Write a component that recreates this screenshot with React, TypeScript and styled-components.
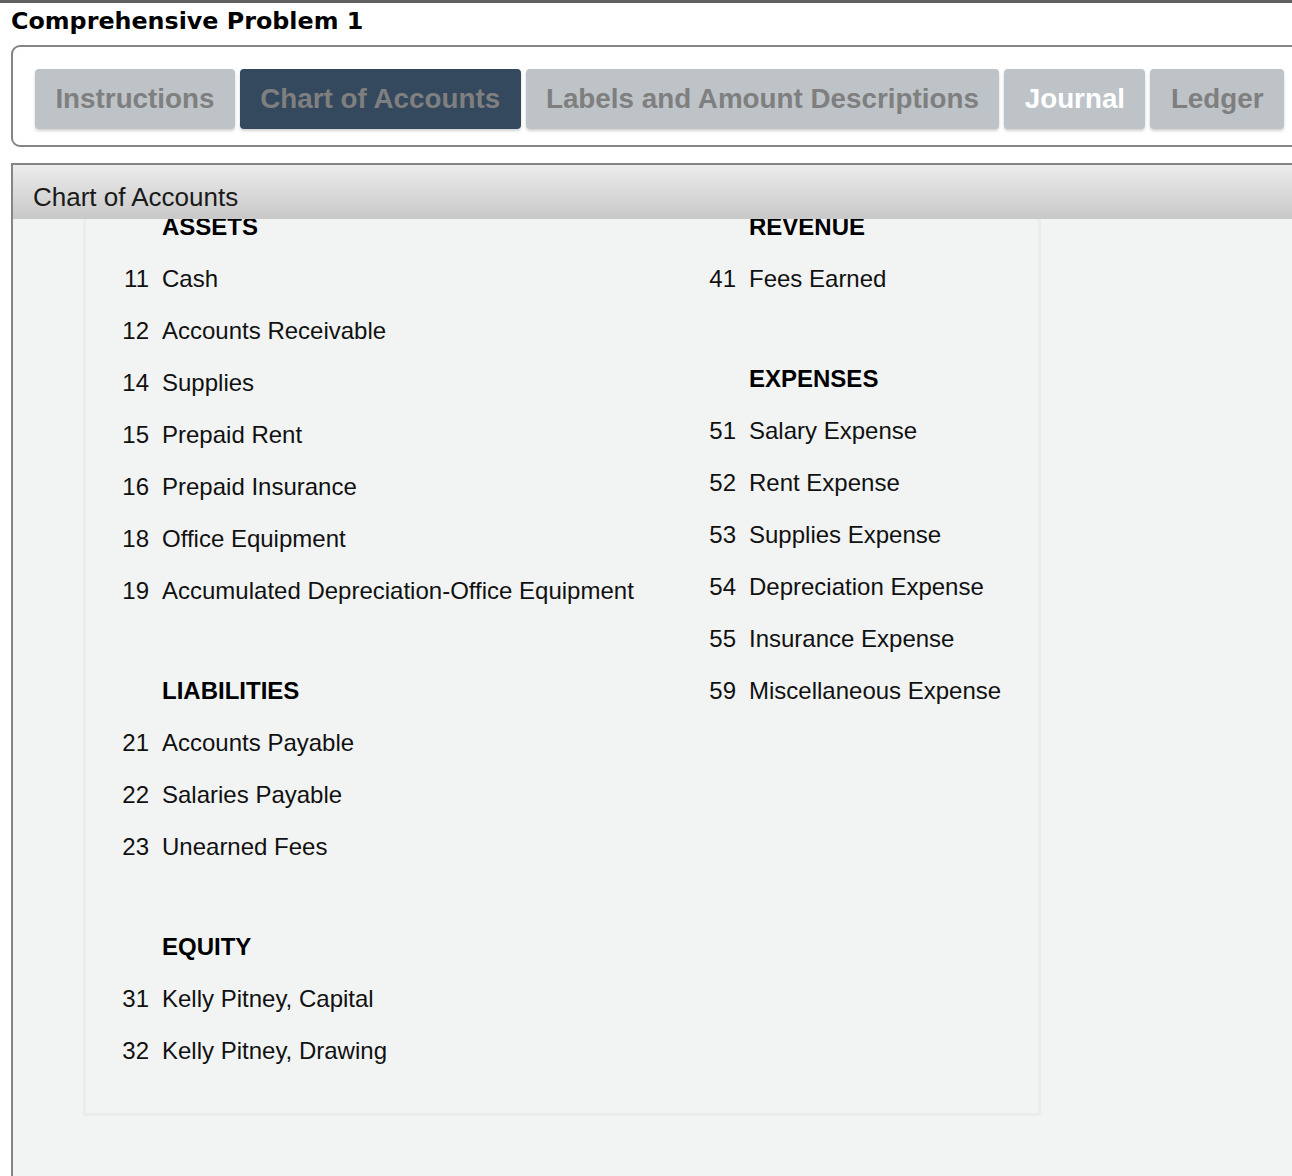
import React from "react";
import styled, { createGlobalStyle } from "styled-components";

const GlobalStyle = createGlobalStyle`
  html, body {
    margin: 0;
    padding: 0;
    background: #ffffff;
    overflow: hidden;
  }
  body {
    font-family: "Liberation Sans", Arial, sans-serif;
    color: #111;
  }
`;

const Page = styled.div`
  border-top: 3px solid #5f5f5f;
  padding-left: 11px;
  width: 1320px;
`;

const Title = styled.h1`
  margin: 0;
  padding-top: 4px;
  height: 38px;
  font-family: "DejaVu Sans", Verdana, sans-serif;
  font-weight: bold;
  font-size: 23.8px;
  line-height: 28px;
  color: #000;
`;

const TabBox = styled.div`
  box-sizing: border-box;
  height: 102px;
  border: 2px solid #858585;
  border-radius: 9px;
  display: flex;
  align-items: flex-start;
  gap: 5px;
  padding: 22px 0 0 22px;
`;

const Tab = styled.div<{ $active?: boolean; $light?: boolean }>`
  height: 60px;
  padding: 0 20.4px;
  display: flex;
  align-items: center;
  border-radius: 4px;
  background: ${(p) => (p.$active ? "#34495e" : "#bdc3c7")};
  color: ${(p) => (p.$light ? "#ffffff" : "#7f7f7f")};
  font-family: "Liberation Sans", Arial, sans-serif;
  font-weight: bold;
  font-size: 27.8px;
  box-shadow: 0 2px 3px rgba(0, 0, 0, 0.18);
  white-space: nowrap;
`;

const Panel = styled.div`
  box-sizing: border-box;
  margin-top: 16px;
  height: 1020px;
  border: 2px solid #858585;
  border-right: none;
  background: #f2f4f3;
  overflow: hidden;
`;

const PanelHeader = styled.div`
  position: relative;
  z-index: 1;
  height: 54px;
  box-sizing: border-box;
  padding: 17px 0 0 20px;
  background: linear-gradient(#ececec, #c8c8c8);
  font-size: 26px;
  line-height: 30px;
  color: #1a1a1a;
`;

const Sheet = styled.div`
  margin: -18px 0 0 70px;
  width: 958px;
  box-sizing: border-box;
  border: 3px solid #ebedec;
  border-top: none;
  padding: 4px 0 36px;
  display: grid;
  grid-template-columns: 587px 1fr;
`;

const Column = styled.div`
  display: flex;
  flex-direction: column;
`;

const Heading = styled.div`
  height: 48px;
  line-height: 44px;
  padding-left: 76px;
  font-weight: bold;
  font-size: 24px;
  color: #000;
`;

const Row = styled.div`
  height: 52px;
  display: flex;
  align-items: center;
  font-size: 24px;
  color: #111;
`;

const Num = styled.span`
  width: 63px;
  text-align: right;
  flex: none;
`;

const Name = styled.span`
  margin-left: 13px;
  white-space: nowrap;
`;

type Item = { kind: "head"; label: string } | { kind: "row"; num: string; label: string } | { kind: "gap" };

const left: Item[] = [
  { kind: "head", label: "ASSETS" },
  { kind: "row", num: "11", label: "Cash" },
  { kind: "row", num: "12", label: "Accounts Receivable" },
  { kind: "row", num: "14", label: "Supplies" },
  { kind: "row", num: "15", label: "Prepaid Rent" },
  { kind: "row", num: "16", label: "Prepaid Insurance" },
  { kind: "row", num: "18", label: "Office Equipment" },
  { kind: "row", num: "19", label: "Accumulated Depreciation-Office Equipment" },
  { kind: "gap" },
  { kind: "head", label: "LIABILITIES" },
  { kind: "row", num: "21", label: "Accounts Payable" },
  { kind: "row", num: "22", label: "Salaries Payable" },
  { kind: "row", num: "23", label: "Unearned Fees" },
  { kind: "gap" },
  { kind: "head", label: "EQUITY" },
  { kind: "row", num: "31", label: "Kelly Pitney, Capital" },
  { kind: "row", num: "32", label: "Kelly Pitney, Drawing" },
];

const right: Item[] = [
  { kind: "head", label: "REVENUE" },
  { kind: "row", num: "41", label: "Fees Earned" },
  { kind: "gap" },
  { kind: "head", label: "EXPENSES" },
  { kind: "row", num: "51", label: "Salary Expense" },
  { kind: "row", num: "52", label: "Rent Expense" },
  { kind: "row", num: "53", label: "Supplies Expense" },
  { kind: "row", num: "54", label: "Depreciation Expense" },
  { kind: "row", num: "55", label: "Insurance Expense" },
  { kind: "row", num: "59", label: "Miscellaneous Expense" },
];

const tabs = [
  { label: "Instructions" },
  { label: "Chart of Accounts", active: true },
  { label: "Labels and Amount Descriptions" },
  { label: "Journal", light: true },
  { label: "Ledger" },
];

const AccountList = ({ items }: { items: Item[] }) => (
  <Column>
    {items.map((item, i) =>
      item.kind === "head" ? (
        <Heading key={i}>{item.label}</Heading>
      ) : item.kind === "row" ? (
        <Row key={i}>
          <Num>{item.num}</Num>
          <Name>{item.label}</Name>
        </Row>
      ) : (
        <Row key={i} />
      )
    )}
  </Column>
);

export default function App() {
  return (
    <Page>
      <GlobalStyle />
      <Title>Comprehensive Problem 1</Title>
      <TabBox>
        {tabs.map((t) => (
          <Tab key={t.label} $active={t.active} $light={t.light}>
            {t.label}
          </Tab>
        ))}
      </TabBox>
      <Panel>
        <PanelHeader>Chart of Accounts</PanelHeader>
        <Sheet>
          <AccountList items={left} />
          <AccountList items={right} />
        </Sheet>
      </Panel>
    </Page>
  );
}
